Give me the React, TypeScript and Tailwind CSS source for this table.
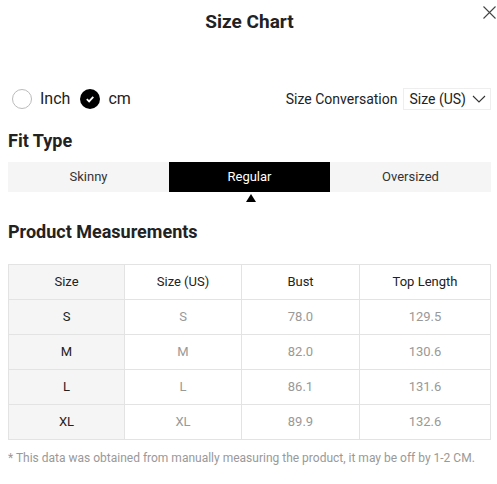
import { useState } from "react";

const rows = [
  { size: "S", us: "S", bust: "78.0", length: "129.5" },
  { size: "M", us: "M", bust: "82.0", length: "130.6" },
  { size: "L", us: "L", bust: "86.1", length: "131.6" },
  { size: "XL", us: "XL", bust: "89.9", length: "132.6" },
];

const fits = ["Skinny", "Regular", "Oversized"];

export default function App() {
  const [unit, setUnit] = useState<"inch" | "cm">("cm");
  const [fit, setFit] = useState("Regular");

  return (
    <div
      className="relative w-[497px] h-[484px] overflow-hidden bg-white pl-2 pr-[6px] text-[#222]"
      style={{ fontFamily: "Roboto, 'Liberation Sans', sans-serif" }}
    >
      {/* Header */}
      <div className="flex h-[44px] items-center justify-center">
        <h1 className="text-[19px] font-bold text-[#222]">Size Chart</h1>
      </div>
      <button className="absolute right-[1px] top-[6px] text-[#444]" aria-label="close">
        <svg width="13" height="13" viewBox="0 0 13 13" fill="none" stroke="currentColor" strokeWidth="1.1">
          <path d="M0.5 0.5 L12.5 12.5 M12.5 0.5 L0.5 12.5" />
        </svg>
      </button>

      {/* Unit + conversion */}
      <div className="mt-[44px] flex h-[22px] items-center justify-between">
        <div className="flex items-center pl-1">
          <button className="flex items-center" onClick={() => setUnit("inch")}>
            <span
              className={
                unit === "inch"
                  ? "flex h-5 w-5 items-center justify-center rounded-full bg-black"
                  : "h-5 w-5 rounded-full border border-[#bbb]"
              }
            />
            <span className="ml-2 text-[16px] text-[#222]">Inch</span>
          </button>
          <button className="ml-[10px] flex items-center" onClick={() => setUnit("cm")}>
            <span
              className={
                unit === "cm"
                  ? "flex h-5 w-5 items-center justify-center rounded-full bg-black"
                  : "h-5 w-5 rounded-full border border-[#bbb]"
              }
            >
              {unit === "cm" && (
                <svg width="10" height="10" viewBox="0 0 10 10" fill="none" stroke="white" strokeWidth="1.8">
                  <path d="M1.8 5.2 L4.1 7.4 L8.3 2.8" />
                </svg>
              )}
            </span>
            <span className="ml-2 text-[16px] text-[#222]">cm</span>
          </button>
        </div>
        <div className="flex items-center">
          <span className="text-[14px] text-[#222]">Size Conversation</span>
          <div className="ml-[6px] flex h-[22px] items-center border border-[#eee] pl-[5px] pr-[4px]">
            <span className="text-[14px] text-[#222]">Size (US)</span>
            <svg className="ml-[6px]" width="14" height="8" viewBox="0 0 14 8" fill="none" stroke="#333" strokeWidth="1.1">
              <path d="M1 1 L7 7 L13 1" />
            </svg>
          </div>
        </div>
      </div>

      {/* Fit type */}
      <h2 className="mt-[19px] h-6 text-[18px] font-bold leading-6">Fit Type</h2>
      <div className="mt-[9px] grid h-[30px] grid-cols-3 bg-[#f5f5f5]">
        {fits.map((f) => (
          <button
            key={f}
            onClick={() => setFit(f)}
            className={
              f === fit
                ? "flex items-center justify-center bg-black text-[13px] text-white"
                : "flex items-center justify-center text-[13px] text-[#333]"
            }
          >
            {f}
          </button>
        ))}
      </div>
      <div className="grid h-[10px] grid-cols-3">
        {fits.map((f) => (
          <div key={f} className="flex justify-center pt-[2px]">
            {f === fit && (
              <div className="ml-[2px] h-0 w-0 border-x-[5px] border-b-[8px] border-x-transparent border-b-black" />
            )}
          </div>
        ))}
      </div>

      {/* Measurements */}
      <h2 className="mt-[18px] h-6 text-[18px] font-bold leading-6">Product Measurements</h2>
      <div className="mt-[20px] border border-[#e3e3e3]">
        <div className="grid h-[34px] grid-cols-[115px_117px_118px_1fr] text-[13px] text-[#222]">
          <div className="flex items-center justify-center bg-[#f5f5f5]">Size</div>
          <div className="flex items-center justify-center border-l border-[#e3e3e3]">Size (US)</div>
          <div className="flex items-center justify-center border-l border-[#e3e3e3]">Bust</div>
          <div className="flex items-center justify-center border-l border-[#e3e3e3]">Top Length</div>
        </div>
        {rows.map((r) => (
          <div
            key={r.size}
            className="grid h-[35px] grid-cols-[115px_117px_118px_1fr] border-t border-[#e3e3e3] text-[13px]"
          >
            <div className="flex items-center justify-center bg-[#f5f5f5] text-[#222]">{r.size}</div>
            <div className="flex items-center justify-center border-l border-[#e3e3e3] text-[#999]">{r.us}</div>
            <div className="flex items-center justify-center border-l border-[#e3e3e3] text-[#999]">{r.bust}</div>
            <div className="flex items-center justify-center border-l border-[#e3e3e3] text-[#999]">{r.length}</div>
          </div>
        ))}
      </div>
      <p className="mt-[10px] text-[12px] leading-4 text-[#999]">
        * This data was obtained from manually measuring the product, it may be off by 1-2 CM.
      </p>
    </div>
  );
}
